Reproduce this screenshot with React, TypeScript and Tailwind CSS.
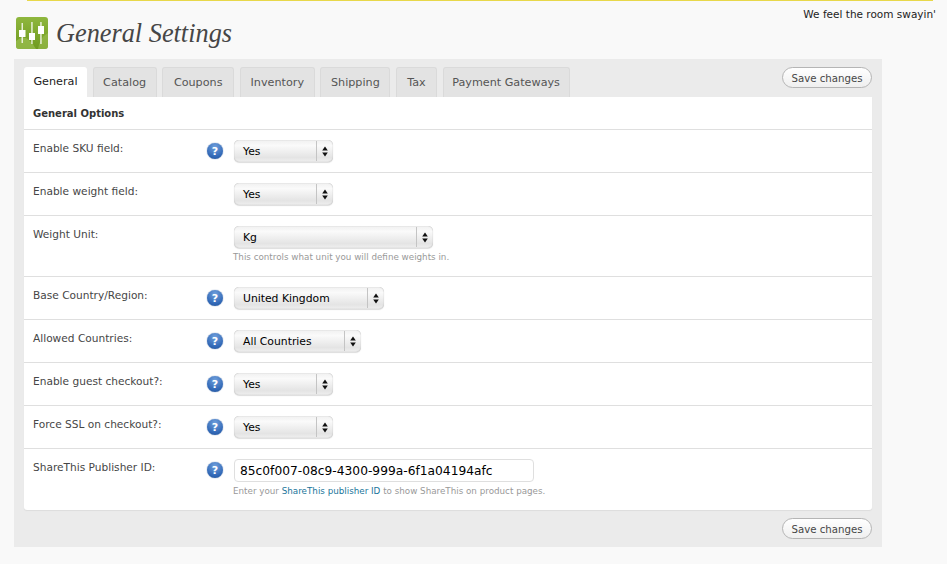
import React from "react";

const sans = "font-['DejaVu_Sans',sans-serif]";

function Logo() {
  return (
    <svg width="32" height="32" viewBox="0 0 32 32" className="shrink-0">
      <defs>
        <linearGradient id="lg" x1="0" y1="0" x2="0" y2="1">
          <stop offset="0" stopColor="#8fb73e" />
          <stop offset="1" stopColor="#6f9a1f" />
        </linearGradient>
      </defs>
      <rect width="32" height="32" rx="3" fill="url(#lg)" />
      <path d="M0 24 Q10 14 20 32 H3 Q0 32 0 29Z" fill="#a3c65a" opacity=".6" />
      <path d="M22 32 Q24 20 32 16 V29 Q32 32 29 32Z" fill="#a3c65a" opacity=".5" />
      <g fill="#fff">
        <rect x="5.5" y="6" width="1.5" height="20" opacity=".8" />
        <rect x="3" y="13" width="6.5" height="7" />
        <rect x="15.2" y="5" width="1.5" height="22" opacity=".8" />
        <rect x="13" y="16" width="6" height="7" />
        <rect x="24.2" y="5" width="1.5" height="22" opacity=".8" />
        <rect x="22" y="9" width="6" height="8" />
      </g>
    </svg>
  );
}

function Help() {
  return (
    <div className="w-4 h-4 rounded-full bg-[radial-gradient(circle_at_50%_25%,#6f9fdc,#2f66b5_70%,#24508f)] flex items-center justify-center text-white text-[11px] font-bold leading-none shadow-[0_0_1px_#244f8e]">
      ?
    </div>
  );
}

function Select({ value, w }: { value: string; w: string }) {
  return (
    <div
      className={`${w} h-[22px] rounded-[5px] flex items-stretch text-black text-[10.8px] bg-[linear-gradient(#f0f0f0,#fafafa_25%,#e4e4e4_80%,#efefef)] shadow-[inset_0_0_1px_#999,0_1px_1px_#ddd]`}
    >
      <div className="flex-1 pl-[9px] pt-[2px] flex items-center">{value}</div>
      <div className="w-[17px] my-[1px] border-l border-[#c4c4c4] flex items-center justify-center">
        <svg width="6" height="11" viewBox="0 0 6 11" className="fill-[#111]">
          <path d="M3 0.5 L5.8 4.5 H0.2Z" />
          <path d="M3 10.5 L5.8 6.5 H0.2Z" />
        </svg>
      </div>
    </div>
  );
}

function SaveButton() {
  return (
    <button className="block w-[90px] h-[21px] pt-[3px] rounded-full border border-[#b5b5b5] bg-[linear-gradient(#ffffff,#efefef)] text-[10.2px] text-[#464646] leading-none">
      Save changes
    </button>
  );
}

function Row({
  label,
  help,
  children,
  last,
}: {
  label: string;
  help?: boolean;
  children: React.ReactNode;
  last?: boolean;
}) {
  return (
    <div className={`flex pt-[10px] pb-[10px] ${last ? "" : "border-b border-[#dfdfdf]"}`}>
      <div className="w-[183px] pl-[9px] text-[10.6px] leading-[16px] text-[#464646]">{label}</div>
      <div className="w-[27px] pt-[3px]">{help ? <Help /> : null}</div>
      <div className="flex-1">{children}</div>
    </div>
  );
}

function Hint({ children }: { children: React.ReactNode }) {
  return <p className="mt-[2px] mb-[2px] -ml-px text-[8.75px] leading-[14px] text-[#999]">{children}</p>;
}

const tabs = [
  { t: "Catalog", w: "w-[64px]" },
  { t: "Coupons", w: "w-[72px]" },
  { t: "Inventory", w: "w-[75px]" },
  { t: "Shipping", w: "w-[70px]" },
  { t: "Tax", w: "w-[41px]" },
  { t: "Payment Gateways", w: "w-[127px]" },
];

export default function App() {
  return (
    <div className={`${sans} w-[947px] h-[564px] overflow-hidden bg-[#f9f9f9]`}>
      <div className="ml-[27px] mr-[14px] h-px bg-[#e8d84a]" />
      <div className="flex justify-between items-start">
        <div className="flex items-center gap-2 ml-4 mt-4 h-8">
          <Logo />
          <h1 className="font-['Liberation_Serif',serif] italic text-[26.3px] pt-[2px] text-[#464646] leading-none">
            General Settings
          </h1>
        </div>
        <div className="mt-[5px] mr-[11px] text-[10.5px] leading-[16px] text-[#222]">We feel the room swayin'</div>
      </div>

      <div className="ml-[14px] mt-[10px] w-[868px] h-[488px] bg-[#ebebeb] px-[10px] pt-2">
        <div className="flex items-start justify-between h-[30px]">
          <div className="flex gap-[5.6px]">
            <div className="w-[63px] h-[30px] pt-px rounded-t-[3px] bg-white text-[11.2px] text-[#222] flex items-center justify-center">
              General
            </div>
            {tabs.map(({ t, w }) => (
              <div
                key={t}
                className={`${w} h-[30px] pt-px rounded-t-[3px] border border-b-0 border-[#dadada] bg-[#e3e3e3] text-[11.2px] text-[#555] flex items-center justify-center`}
              >
                {t}
              </div>
            ))}
          </div>
          <SaveButton />
        </div>

        <div className="bg-white rounded-b-[3px] shadow-[0_1px_1px_#ddd]">
          <div className="h-[33px] pl-[9px] flex items-center border-b border-[#dfdfdf] text-[10px] font-bold text-[#333]">
            General Options
          </div>
          <Row label="Enable SKU field:" help>
            <Select value="Yes" w="w-[99px]" />
          </Row>
          <Row label="Enable weight field:">
            <Select value="Yes" w="w-[99px]" />
          </Row>
          <Row label="Weight Unit:">
            <Select value="Kg" w="w-[199px]" />
            <Hint>This controls what unit you will define weights in.</Hint>
          </Row>
          <Row label="Base Country/Region:" help>
            <Select value="United Kingdom" w="w-[150px]" />
          </Row>
          <Row label="Allowed Countries:" help>
            <Select value="All Countries" w="w-[127px]" />
          </Row>
          <Row label="Enable guest checkout?:" help>
            <Select value="Yes" w="w-[99px]" />
          </Row>
          <Row label="Force SSL on checkout?:" help>
            <Select value="Yes" w="w-[99px]" />
          </Row>
          <Row label="ShareThis Publisher ID:" help last>
            <input
              readOnly
              value="85c0f007-08c9-4300-999a-6f1a04194afc"
              className="block w-[300px] h-[23px] px-[5px] rounded-[4px] border border-[#dfdfdf] bg-white text-[12.25px] text-black outline-none"
            />
            <Hint>
              Enter your <span className="text-[#21759b]">ShareThis publisher ID</span> to show ShareThis on product pages.
            </Hint>
          </Row>
        </div>

        <div className="flex justify-end mt-[8px]">
          <SaveButton />
        </div>
      </div>
    </div>
  );
}
